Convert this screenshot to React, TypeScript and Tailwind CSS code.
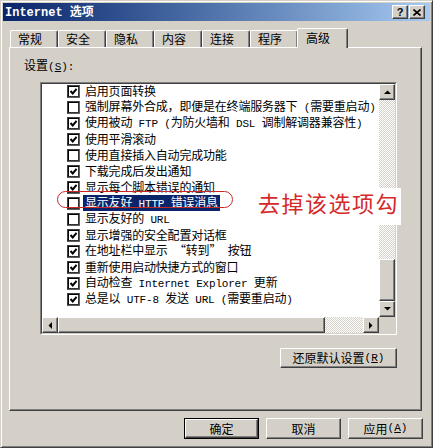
import React from "react";

const raised =
  "bg-[#d4d0c8] border border-t-white border-l-white border-r-[#404040] border-b-[#404040] shadow-[inset_-1px_-1px_#808080]";

// ascii runs get the mono face, the rest falls back to the CJK font
const Txt = ({ s }: { s: string }) => (
  <>
    {s.split(/([\x20-\x7e]+)/).map((p, i) =>
      /^[\x20-\x7e]+$/.test(p) ? (
        <span key={i} className="font-['Liberation_Mono'] text-[11px]">
          {p}
        </span>
      ) : (
        <React.Fragment key={i}>{p}</React.Fragment>
      )
    )}
  </>
);

const Arrow = ({ dir }: { dir: "up" | "down" | "left" | "right" }) => {
  const pts = {
    up: "0,4 7,4 3.5,0.5",
    down: "0,0 7,0 3.5,3.5",
    left: "4,0 4,7 0.5,3.5",
    right: "0,0 0,7 3.5,3.5",
  }[dir];
  const vert = dir === "up" || dir === "down";
  return (
    <svg width={vert ? 7 : 4} height={vert ? 4 : 7} viewBox={vert ? "0 0 7 4" : "0 0 4 7"}>
      <polygon points={pts} fill="#000" />
    </svg>
  );
};

const Check = ({ on }: { on: boolean }) => (
  <div className="w-[13px] h-[13px] shrink-0 border border-t-[#404040] border-l-[#404040] border-r-[#606060] border-b-[#606060]">
    <div className="w-full h-full bg-white border border-t-[#000] border-l-[#000] border-r-[#303030] border-b-[#303030] flex items-center justify-center">
      {on && (
        <svg width="7" height="7" viewBox="0 0 7 7">
          <polyline points="0.5,3 2.7,5.4 6.6,1" fill="none" stroke="#000" strokeWidth="2" />
        </svg>
      )}
    </div>
  </div>
);

const rows: [boolean, string][] = [
  [true, "启用页面转换"],
  [false, "强制屏幕外合成，即便是在终端服务器下 (需要重启动)"],
  [true, "使用被动 FTP (为防火墙和 DSL 调制解调器兼容性)"],
  [true, "使用平滑滚动"],
  [false, "使用直接插入自动完成功能"],
  [true, "下载完成后发出通知"],
  [true, "显示每个脚本错误的通知"],
  [false, "显示友好 HTTP 错误消息"],
  [false, "显示友好的 URL"],
  [true, "显示增强的安全配置对话框"],
  [true, "在地址栏中显示 “转到” 按钮"],
  [true, "重新使用启动快捷方式的窗口"],
  [true, "自动检查 Internet Explorer 更新"],
  [true, "总是以 UTF-8 发送 URL (需要重启动)"],
];

const tabs = ["常规", "安全", "隐私", "内容", "连接", "程序"];

const checker =
  "bg-[repeating-conic-gradient(#ffffff_0%_25%,#d4d0c8_0%_50%)] bg-size-[2px_2px]";

export default function App() {
  return (
    <div className="relative w-[433px] h-[448px] bg-[#d4d0c8] p-[2px] border border-t-[#d4d0c8] border-l-[#d4d0c8] border-r-[#404040] border-b-[#404040] shadow-[inset_1px_1px_white,inset_-1px_-1px_#808080] font-['Noto_Sans_CJK_SC',sans-serif] text-[12px] text-black overflow-hidden">
      {/* title bar */}
      <div className="h-[18px] flex items-center justify-between bg-linear-to-r from-[#0a246a] to-[#a6caf0] pl-[2px] pr-[5px]">
        <div className="text-white font-bold text-[12px] leading-[18px] whitespace-pre">
          <span className="font-['Liberation_Mono']">Internet </span>选项
        </div>
        <div className="flex gap-px">
          <div className={`${raised} w-[16px] h-[14px] flex items-center justify-center`}>
            <span className="font-['Liberation_Sans'] font-bold text-[11px] leading-none">?</span>
          </div>
          <div className={`${raised} w-[16px] h-[14px] flex items-center justify-center`}>
            <svg width="8" height="7" viewBox="0 0 8 7">
              <path d="M0.5 0.5 L7.5 6.5 M7.5 0.5 L0.5 6.5" stroke="#000" strokeWidth="1.6" />
            </svg>
          </div>
        </div>
      </div>

      {/* tabs */}
      <div className="flex items-end mt-[7px] pl-[7px]">
        {tabs.map((t) => (
          <div
            key={t}
            className="w-[48px] h-[17px] pl-[7px] leading-[16px] border border-b-0 border-t-white border-l-white border-r-[#404040] rounded-t-[2px] shadow-[inset_-1px_0_#808080]"
          >
            {t}
          </div>
        ))}
        <div className="relative z-10 -ml-px -mb-px w-[51px] h-[20px] pl-[8px] leading-[18px] bg-[#d4d0c8] border border-b-0 border-t-white border-l-white border-r-[#404040] rounded-t-[2px] shadow-[inset_-1px_0_#808080]">
          高级
        </div>
      </div>

      {/* panel */}
      <div className="ml-[6px] w-[413px] h-[364px] border border-t-white border-l-white border-r-[#404040] border-b-[#404040] shadow-[inset_-1px_-1px_#808080]">
        <div className="mt-[9px] ml-[14px] leading-[16px]">
          设置<span className="font-['Liberation_Mono'] text-[11px]">(<u>S</u>):</span>
        </div>

        <div className="mt-[7px] ml-[30px] w-[357px] h-[253px] border border-t-[#808080] border-l-[#808080] border-r-white border-b-white">
          <div className="w-full h-full border border-t-[#404040] border-l-[#404040] border-r-[#d4d0c8] border-b-[#d4d0c8] grid grid-cols-[337px_16px] grid-rows-[233px_16px]">
            <div className="bg-white overflow-hidden">
              <div className="-mt-px">
                {rows.map(([on, label], i) => (
                  <div key={i} className="h-[16px] flex items-center pl-[25px] whitespace-pre tracking-[-0.2px]">
                    <Check on={on} />
                    <span
                      className={`ml-[3px] px-[2px] leading-[14px] ${
                        i === 7 ? "bg-[#0a246a] text-white" : ""
                      }`}
                    >
                      <Txt s={label} />
                    </span>
                  </div>
                ))}
              </div>
            </div>

            {/* vertical scrollbar */}
            <div className="flex flex-col">
              <div className={`${raised} h-[16px] flex items-center justify-center`}>
                <Arrow dir="up" />
              </div>
              <div className={`${checker} h-[159px]`} />
              <div className={`${raised} h-[42px]`} />
              <div className={`${raised} h-[16px] flex items-center justify-center`}>
                <Arrow dir="down" />
              </div>
            </div>

            {/* horizontal scrollbar */}
            <div className="flex">
              <div className={`${raised} w-[16px] flex items-center justify-center`}>
                <Arrow dir="left" />
              </div>
              <div className={`${raised} w-[267px]`} />
              <div className={`${checker} w-[38px]`} />
              <div className={`${raised} w-[16px] flex items-center justify-center`}>
                <Arrow dir="right" />
              </div>
            </div>
            <div className="bg-[#d4d0c8]" />
          </div>
        </div>

        <div className="mt-[13px] ml-[30px] w-[357px] flex justify-end">
          <div className={`${raised} w-[117px] h-[20px] flex items-center justify-center leading-none`}>
            还原默认设置<span className="font-['Liberation_Mono'] text-[11px]">(<u>R</u>)</span>
          </div>
        </div>
      </div>

      {/* dialog buttons */}
      <div className="mt-[7px] pr-[7px] flex justify-end gap-[7px]">
        <div className="w-[75px] h-[21px] border border-black">
          <div className={`${raised} w-full h-full flex items-center justify-center leading-none`}>确定</div>
        </div>
        <div className={`${raised} w-[75px] h-[21px] flex items-center justify-center leading-none`}>取消</div>
        <div className={`${raised} w-[75px] h-[21px] flex items-center justify-center leading-none`}>
          应用<span className="font-['Liberation_Mono'] text-[11px]">(<u>A</u>)</span>
        </div>
      </div>

      {/* annotation */}
      <div className="absolute left-[56px] top-[190px] w-[176px] h-[17px] rounded-full border border-[#c82828] z-20" />
      <div className="absolute left-[249px] top-[187px] w-[151px] h-[37px] bg-white pl-[8px] pt-[2px] z-20">
        <span className="text-[#d42a2a] text-[22px] leading-[24px] tracking-[1.5px]">去掉该选项勾</span>
      </div>
    </div>
  );
}
